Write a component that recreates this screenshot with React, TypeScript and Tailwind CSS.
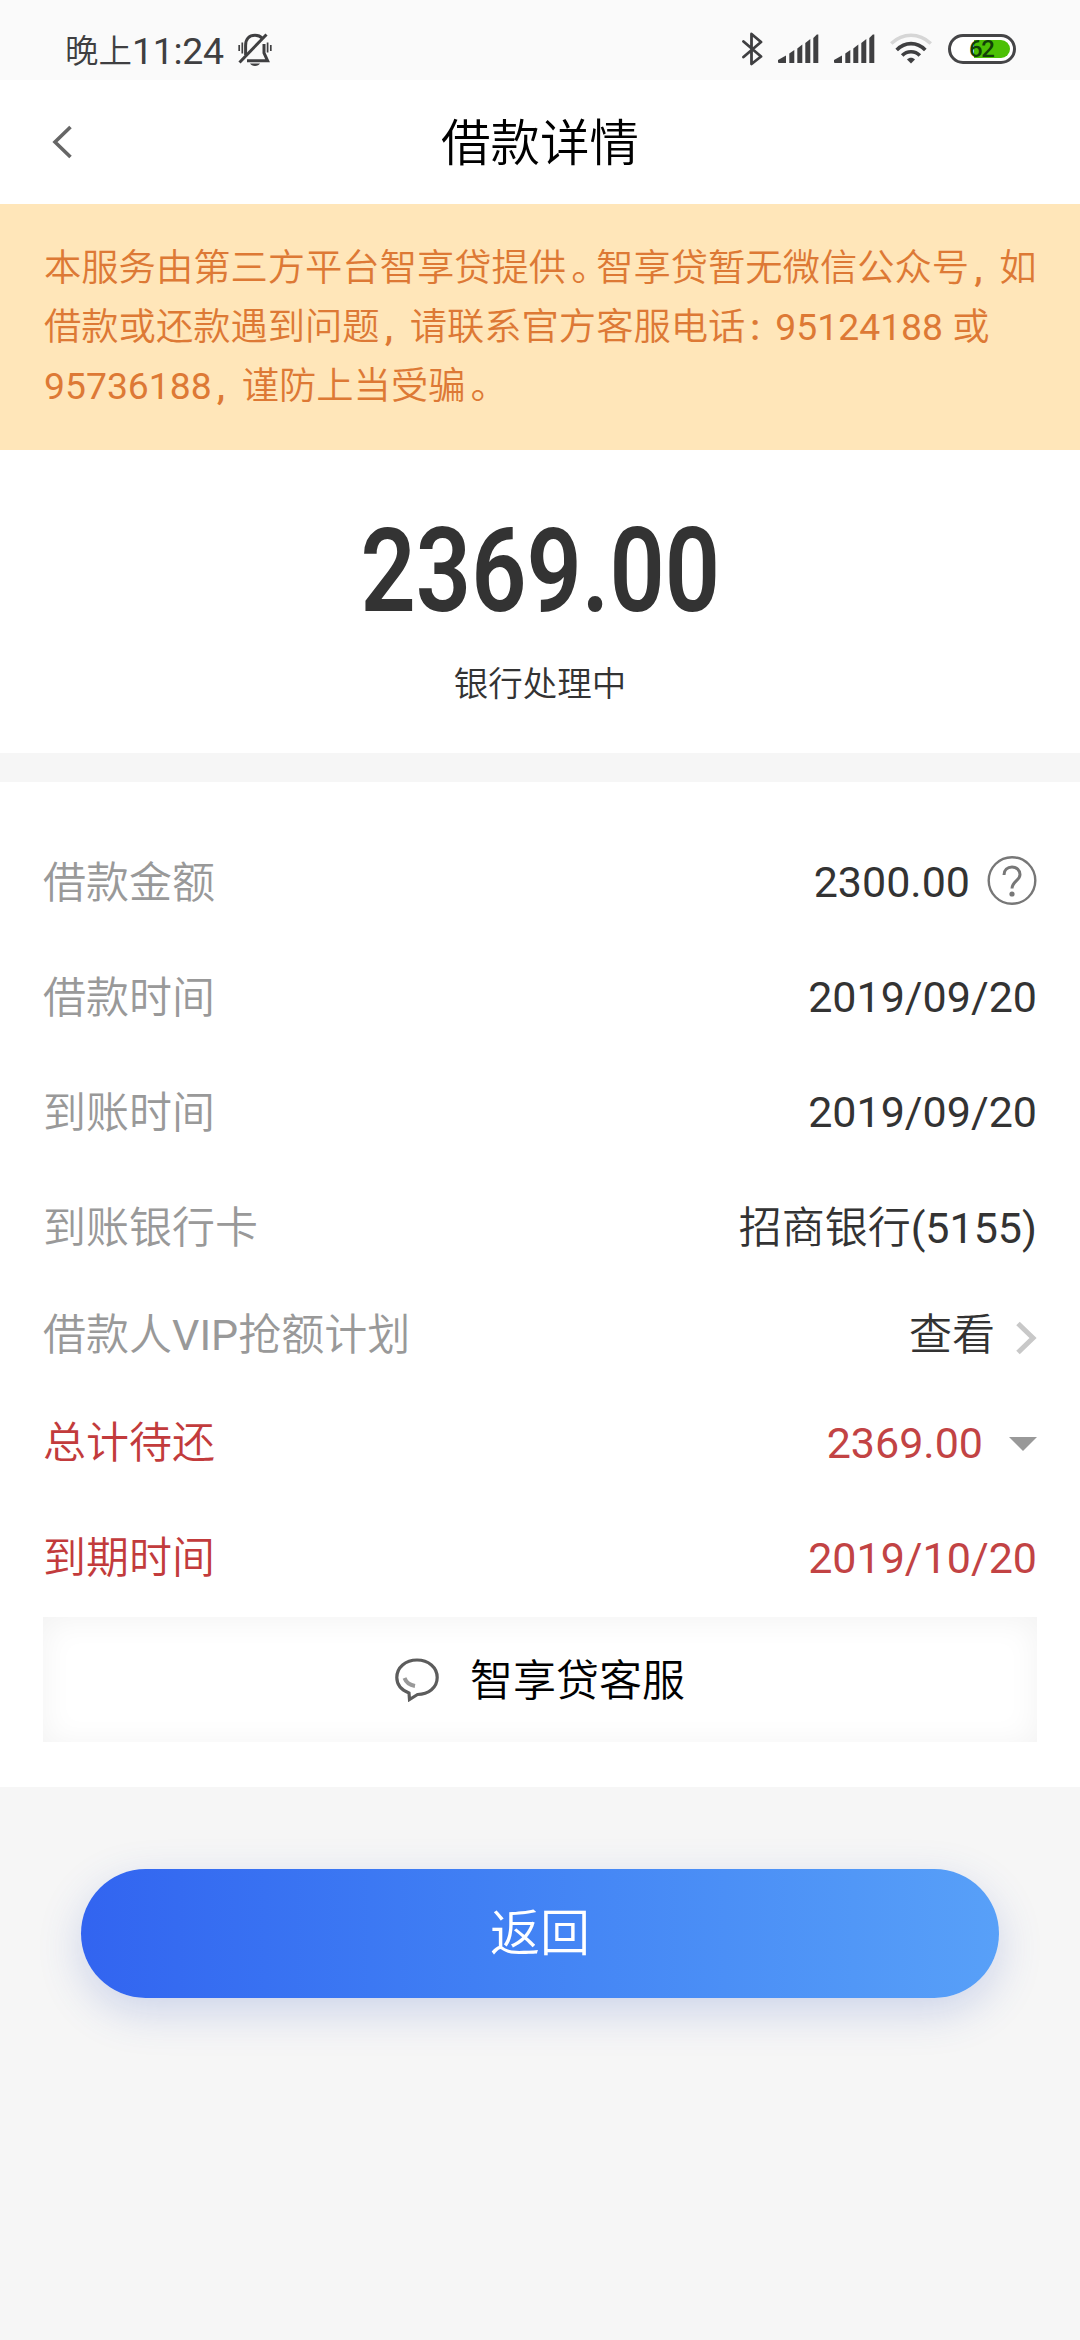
import type { ReactNode } from 'react';

const ink = '#3f3f41';

function MutedBell() {
  return (
    <svg width="34" height="34" viewBox="0 0 34 34" fill="none" stroke={ink} strokeWidth="3">
      <path d="M7.600 22V12.500C7.600 6 11 2.200 17 2.200c3 0 5.500 1 7.300 3" />
      <path d="M1.500 29.500L28.500 1.500" />
      <path d="M26 11v9l3.600 7.800H9" />
      <path d="M12 30.500h10c-1 1.500-2.500 2.500-5 2.500s-4-1-5-2.500z" fill={ink} stroke="none" />
      <path d="M1.200 12v6M4.300 9.500v11M29.600 9.500v10M32.800 12v6" strokeWidth="1.700" />
    </svg>
  );
}

function Bluetooth() {
  return (
    <svg width="21" height="34" viewBox="0 0 21 34" fill="none" stroke={ink} strokeWidth="2.800" strokeLinejoin="round" strokeLinecap="round">
      <path d="M1.500 9.500L19 24.500L9.500 32V2L19 10L1.500 25" />
    </svg>
  );
}

function Signal() {
  return (
    <svg width="41" height="30" viewBox="0 0 41 30" fill={ink}>
      <path d="M0 28.500V26L8 21.500V29H1z" />
      <path d="M11.300 29V19.500l5-3.500V29z" />
      <path d="M19.300 29V14.500l5-4V29z" />
      <path d="M27.300 29V9l5-4V29z" />
      <path d="M35.300 29V4l3.500-3.500H40.300V29z" />
    </svg>
  );
}

function Wifi() {
  return (
    <svg width="42" height="31" viewBox="0 0 42 31" fill="none" stroke={ink} strokeWidth="3.600">
      <path d="M1.200 10.500C13 -.5 29 -.5 40.800 10.500" stroke="#d6d6d6" />
      <path d="M6.700 17C15 8.500 27 8.500 35.300 17" />
      <path d="M12.200 22.500C17 17.500 25 17.500 29.800 22.500" />
      <path d="M17 26.500c2.200-2.400 5.800-2.400 8 0L21 30.500z" fill={ink} stroke="none" />
    </svg>
  );
}

function Battery() {
  return (
    <div className="relative h-[30px] w-[68px] rounded-full border-[3px] border-[#454547] bg-white p-[3px]">
      <div className="ml-auto h-full w-[36px] rounded-r-full bg-[#4cc005]" />
      <span className="absolute left-[18px] top-[1px] font-['Roboto'] text-[24px] font-medium leading-[23px] tracking-[-1.500px] text-[#123f08]">62</span>
    </div>
  );
}

function Mark({ children }: { children: string }) {
  return <span className="inline-block w-[30px] whitespace-nowrap pl-[5px] font-medium [font-feature-settings:'halt']">{children}</span>;
}

function Num({ children }: { children: string }) {
  return <span className="relative -top-px">{children}</span>;
}

function Row({ label, tone = 'normal', height = 'h-[115px]', children }: { label: ReactNode; tone?: 'normal' | 'due'; height?: string; children: ReactNode }) {
  return (
    <div className={`flex items-center justify-between ${height}`}>
      <span className={tone === 'due' ? 'text-[#c23b3c]' : 'text-[#999999]'}>{label}</span>
      <div className={`flex items-center ${tone === 'due' ? 'text-[#c24344]' : 'text-[#333333]'}`}>{children}</div>
    </div>
  );
}

export default function App() {
  return (
    <div className="flex h-[2340px] w-[1080px] flex-col overflow-hidden bg-[#f6f6f6] font-['Roboto','Noto_Sans_CJK_SC_DemiLight','Noto_Sans_CJK_SC',sans-serif] font-normal">
      <div className="flex h-[80px] items-start justify-between bg-[#fafafa] pl-[65px] pr-[64px] pt-[32px]">
        <div className="flex text-[#3f3f41]">
          <span className="mt-[2px] flex h-[36px] items-center text-[33.500px]">晚上</span>
          <span className="mt-px flex h-[36px] items-center text-[37.500px] tracking-[-0.300px]">11:24</span>
          <span className="ml-[14px] mt-[1px]"><MutedBell /></span>
        </div>
        <div className="flex">
          <Bluetooth />
          <span className="ml-[15px] mt-[2px]"><Signal /></span>
          <span className="ml-[15px] mt-[2px]"><Signal /></span>
          <span className="ml-[15px] mt-[1px]"><Wifi /></span>
          <span className="ml-[16px] mt-[2px]"><Battery /></span>
        </div>
      </div>

      <div className="grid h-[124px] grid-cols-[200px_1fr_200px] items-center bg-white">
        <svg className="ml-[52px]" width="22" height="34" viewBox="0 0 22 34" fill="none" stroke="#666666" strokeWidth="3.600">
          <path d="M18.500 2L3 17L18.500 32" />
        </svg>
        <h1 className="pt-[4px] text-center text-[49.500px] leading-[60px] text-black">借款详情</h1>
      </div>

      <div className="h-[246px] whitespace-nowrap bg-[#ffe6b9] pl-[44px] pt-[35px] text-[37.300px] leading-[59px] text-[#dd7935]">
        <p>本服务由第三方平台智享贷提供<Mark>。</Mark>智享贷暂无微信公众号<Mark>,</Mark>如</p>
        <p>借款或还款遇到问题<Mark>,</Mark>请联系官方客服电话<Mark>:</Mark>95124188 或</p>
        <p>95736188<Mark>,</Mark>谨防上当受骗<Mark>。</Mark></p>
      </div>

      <div className="flex h-[303px] flex-col items-center bg-white pt-[63px]">
        <div className="origin-center scale-x-[0.835] text-[116px] font-semibold leading-[116px] text-[#333333]">2369.00</div>
        <div className="mt-[33px] text-[34.500px] leading-[44px] text-[#333333]">银行处理中</div>
      </div>

      <div className="mt-[29px] h-[1005px] bg-white px-[43px] pt-[43px] text-[43px] leading-[60px]">
        <Row label="借款金额">
          <Num>2300.00</Num>
          <svg className="-mt-[3px] ml-[17px]" width="50" height="50" viewBox="0 0 50 50" fill="none" stroke="#777777" strokeWidth="2.400">
            <circle cx="25" cy="24.500" r="23.300" />
            <path d="M17 19c0-5 3.500-8 8-8s8 3 8 7.500c0 6-8 7-8 14" strokeWidth="3" />
            <circle cx="25" cy="38" r="2.600" fill="#777777" stroke="none" />
          </svg>
        </Row>
        <Row label="借款时间"><Num>2019/09/20</Num></Row>
        <Row label="到账时间"><Num>2019/09/20</Num></Row>
        <Row label="到账银行卡">招商银行(5155)</Row>
        <Row label="借款人VIP抢额计划" height="h-[100px]">
          查看
          <svg className="ml-[20px] mt-[6px]" width="22" height="34" viewBox="0 0 22 34" fill="none" stroke="#c8c8c8" strokeWidth="5">
            <path d="M3 2.500L18 17L3 31.500" />
          </svg>
        </Row>
        <Row label="总计待还" tone="due">
          2369.00
          <svg className="ml-[26px] mt-[2px]" width="28" height="14" viewBox="0 0 28 14" fill="#999999">
            <path d="M0 0H28L14 14z" />
          </svg>
        </Row>
        <Row label="到期时间" tone="due">2019/10/20</Row>

        <div className="mt-[2px] flex h-[125px] items-center justify-center text-black shadow-[inset_0_3px_32px_rgba(0,0,0,0.055)]">
          <svg className="mr-[31px]" width="44" height="44" viewBox="0 0 44 44" fill="none" stroke="#5c5c5c" strokeWidth="3.200">
            <path d="M14 35C6.500 32 1.800 26.500 1.800 19.500C1.800 9.500 10.500 2 22 2s20.200 7.500 20.200 17.500S33.500 36.500 22.500 36.500L14.500 41.500z" />
            <path d="M9.500 20c1.500 4 5 7 10.500 8" stroke="#999999" strokeWidth="4" />
          </svg>
          <span className="relative top-px">智享贷客服</span>
        </div>
      </div>

      <button className="mx-[81px] mt-[82px] h-[129px] shrink-0 rounded-full bg-linear-to-r from-[#3264f0] to-[#58a0f8] pt-[2px] text-[50px] text-white shadow-[0_14px_44px_rgba(60,90,190,0.220)]">返回</button>
    </div>
  );
}
